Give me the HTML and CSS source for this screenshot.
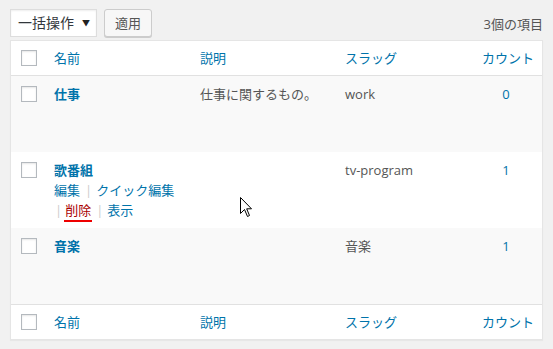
FILE: index.html
```html
<!DOCTYPE html>
<html lang="ja">
<head>
<meta charset="utf-8">
<link rel="stylesheet" href="styles.css">
</head>
<body>
<div class="wrap">
  <div class="tablenav">
    <div class="bulk">
      <div class="select">一括操作 <span class="arrow">▼</span></div>
      <div class="button">適用</div>
    </div>
    <div class="count-items">3個の項目</div>
  </div>
  <table class="list">
    <thead>
      <tr>
        <th class="cb"><span class="check"></span></th>
        <th class="c-name"><a>名前</a></th>
        <th class="c-desc"><a>説明</a></th>
        <th class="c-slug"><a>スラッグ</a></th>
        <th class="c-num"><a>カウント</a></th>
      </tr>
    </thead>
    <tbody>
      <tr class="alt">
        <td class="cb"><span class="check"></span></td>
        <td class="c-name"><a class="title">仕事</a><div class="actions"></div><div class="actions"></div></td>
        <td class="c-desc">仕事に関するもの。</td>
        <td class="c-slug">work</td>
        <td class="c-num"><a>0</a></td>
      </tr>
      <tr>
        <td class="cb"><span class="check"></span></td>
        <td class="c-name"><a class="title">歌番組</a>
          <div class="actions"><a>編集</a><span class="sep">|</span><a>クイック編集</a></div>
          <div class="actions second"><span class="sep first">|</span><a class="delete">削除</a><span class="sep">|</span><a>表示</a></div>
        </td>
        <td class="c-desc"></td>
        <td class="c-slug">tv-program</td>
        <td class="c-num"><a>1</a></td>
      </tr>
      <tr class="alt">
        <td class="cb"><span class="check"></span></td>
        <td class="c-name"><a class="title">音楽</a><div class="actions"></div><div class="actions"></div></td>
        <td class="c-desc"></td>
        <td class="c-slug">音楽</td>
        <td class="c-num"><a>1</a></td>
      </tr>
    </tbody>
    <tfoot>
      <tr>
        <th class="cb"><span class="check"></span></th>
        <th class="c-name"><a>名前</a></th>
        <th class="c-desc"><a>説明</a></th>
        <th class="c-slug"><a>スラッグ</a></th>
        <th class="c-num"><a>カウント</a></th>
      </tr>
    </tfoot>
  </table>
</div>
<svg class="cursor" width="13" height="21" viewBox="0 0 13 21">
  <path d="M0.5 0.5 L0.5 16.5 L4.5 12.5 L7.5 19.5 L9.5 18.5 L6.7 11.8 L11.5 11.8 Z" fill="#fff" stroke="#000" stroke-width="1" stroke-linejoin="miter"/>
</svg>
</body>
</html>
```
FILE: styles.css
```css
html, body {
  margin: 0;
  padding: 0;
  background: #f1f1f1;
}
body {
  font-family: "Open Sans", "Noto Sans CJK JP", sans-serif;
  font-size: 13px;
  color: #555;
  position: relative;
  width: 553px;
  height: 349px;
  overflow: hidden;
}
.wrap {
  padding: 9px 10px 0 10px;
}
.tablenav {
  display: flex;
  justify-content: space-between;
  align-items: center;
  height: 28px;
  margin-bottom: 3px;
}
.bulk {
  display: flex;
  gap: 7px;
}
.select {
  box-sizing: border-box;
  width: 87px;
  height: 28px;
  border: 1px solid #ddd;
  background: #fff;
  box-shadow: inset 0 1px 2px rgba(0,0,0,.07);
  color: #32373c;
  padding-left: 7px;
  line-height: 26px;
  font-size: 14px;
  position: relative;
}
.arrow {
  position: absolute;
  right: 6px;
  top: 0;
  font-size: 8px;
  color: #222;
}
.button {
  box-sizing: border-box;
  width: 48px;
  height: 28px;
  border: 1px solid #ccc;
  border-radius: 3px;
  background: #f7f7f7;
  box-shadow: 0 1px 0 #ccc;
  color: #555;
  text-align: center;
  line-height: 26px;
}
.count-items {
  color: #555;
  padding-right: 0;
}
.list {
  box-sizing: border-box;
  width: 533px;
  border: 1px solid #e5e5e5;
  border-spacing: 0;
  background: #fff;
  box-shadow: 0 1px 1px rgba(0,0,0,.04);
  table-layout: fixed;
}
.list th, .list td {
  text-align: left;
  font-weight: normal;
  vertical-align: top;
  line-height: 20px;
  padding: 8px 10px;
}
.list thead th, .list tfoot th {
  padding: 7px 10px;
}
.list thead th {
  border-bottom: 1px solid #e1e1e1;
}
.list tfoot th {
  border-top: 1px solid #e1e1e1;
}
.list a {
  color: #0073aa;
}
.list tr.alt td {
  background: #f9f9f9;
}
.list .cb {
  width: 33px;
  box-sizing: border-box;
  padding: 10px 0 0 10px;
}
.list thead .cb, .list tfoot .cb {
  padding: 9px 0 0 10px;
}
.check {
  display: block;
  box-sizing: border-box;
  width: 16px;
  height: 16px;
  border: 1px solid #b4b9be;
  background: #fff;
  box-shadow: inset 0 1px 2px rgba(0,0,0,.1);
}
.c-name { width: 146px; box-sizing: border-box; }
.c-desc { width: 145px; box-sizing: border-box; }
.c-slug { width: 135px; box-sizing: border-box; }
.c-num { box-sizing: border-box; }
.list .c-num { text-align: center; padding-left: 0; padding-right: 0; }
.list thead .c-num, .list tfoot .c-num { text-align: right; padding-right: 8px; }
.title {
  font-weight: bold;
  display: block;
}
.actions {
  height: 20px;
  white-space: nowrap;
}
.sep {
  color: #ccc;
  margin: 0 4px 0 5px;
}
.sep.first {
  margin: 0 3px 0 1px;
}
.delete {
  color: #a00 !important;
  position: relative;
}
.delete::after {
  content: "";
  position: absolute;
  left: -1px;
  right: -1px;
  bottom: -3px;
  height: 2px;
  background: #e00;
}
.cursor {
  position: absolute;
  left: 240px;
  top: 197px;
}
```
